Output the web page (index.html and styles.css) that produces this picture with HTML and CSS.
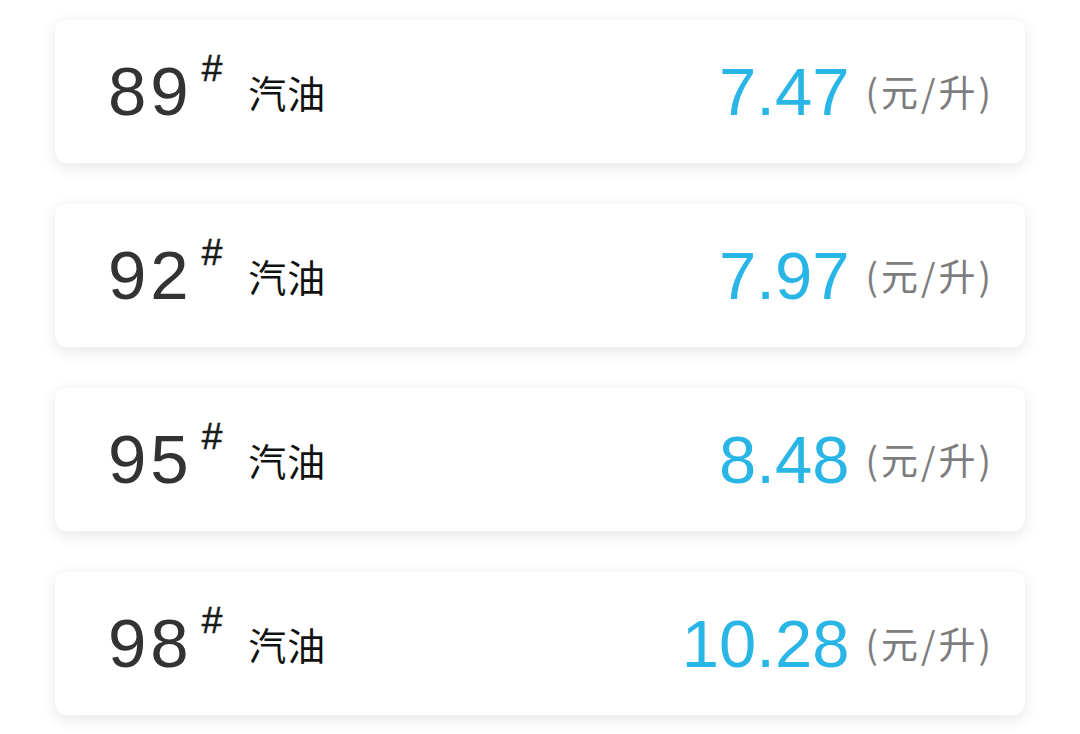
FILE: index.html
```html
<!DOCTYPE html>
<html lang="zh">
<head>
<meta charset="utf-8">
<link rel="stylesheet" href="styles.css">
</head>
<body>
<div class="list">
  <div class="card">
    <div class="grade"><span class="num">89</span><sup class="hash">#</sup><span class="kind">汽油</span></div>
    <div class="price"><span class="val">7.47</span><span class="unit">(元/升)</span></div>
  </div>
  <div class="card">
    <div class="grade"><span class="num">92</span><sup class="hash">#</sup><span class="kind">汽油</span></div>
    <div class="price"><span class="val">7.97</span><span class="unit">(元/升)</span></div>
  </div>
  <div class="card">
    <div class="grade"><span class="num">95</span><sup class="hash">#</sup><span class="kind">汽油</span></div>
    <div class="price"><span class="val">8.48</span><span class="unit">(元/升)</span></div>
  </div>
  <div class="card">
    <div class="grade"><span class="num">98</span><sup class="hash">#</sup><span class="kind">汽油</span></div>
    <div class="price"><span class="val">10.28</span><span class="unit">(元/升)</span></div>
  </div>
</div>
</body>
</html>
```
FILE: styles.css
```css
html, body {
  margin: 0;
  padding: 0;
  background: #ffffff;
}
body {
  width: 1080px;
  height: 734px;
  overflow: hidden;
  font-family: "Liberation Sans", "Noto Sans CJK SC", sans-serif;
}
.list {
  display: flex;
  flex-direction: column;
  gap: 41px;
  padding: 20px 55px 0 55px;
}
.card {
  height: 143px;
  background: #fff;
  border-radius: 12px;
  box-shadow: 0 4px 16px rgba(0, 0, 0, 0.1);
  display: flex;
  align-items: center;
  justify-content: space-between;
  padding: 0 31px 0 53px;
  box-sizing: border-box;
}
.grade {
  display: flex;
  align-items: center;
}
.num {
  font-size: 69px;
  color: #333333;
  letter-spacing: 4px;
  line-height: 1;
}
.hash {
  font-size: 37px;
  color: #1a1a1a;
  align-self: flex-start;
  margin: -7px 0 0 9px;
  line-height: 1;
  -webkit-text-stroke: 0.6px #1a1a1a;
}
.kind {
  font-family: "Noto Sans CJK SC", sans-serif;
  font-size: 38px;
  color: #111111;
  margin-left: 26px;
  letter-spacing: 1px;
  line-height: 1;
}
.price {
  display: flex;
  align-items: center;
}
.val {
  font-size: 67px;
  color: #29b6e6;
  line-height: 1;
}
.unit {
  font-family: "Noto Sans CJK SC", sans-serif;
  font-size: 37px;
  color: #7d7d7d;
  margin-left: 16px;
  letter-spacing: 3px;
  line-height: 1;
}
```
